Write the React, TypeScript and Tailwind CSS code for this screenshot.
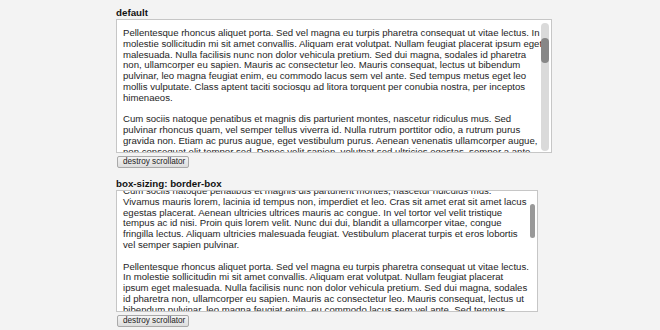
import React from "react";

const P1 =
  "Pellentesque rhoncus aliquet porta. Sed vel magna eu turpis pharetra consequat ut vitae lectus. In molestie sollicitudin mi sit amet convallis. Aliquam erat volutpat. Nullam feugiat placerat ipsum eget malesuada. Nulla facilisis nunc non dolor vehicula pretium. Sed dui magna, sodales id pharetra non, ullamcorper eu sapien. Mauris ac consectetur leo. Mauris consequat, lectus ut bibendum pulvinar, leo magna feugiat enim, eu commodo lacus sem vel ante. Sed tempus metus eget leo mollis vulputate. Class aptent taciti sociosqu ad litora torquent per conubia nostra, per inceptos himenaeos.";

const P2 =
  "Cum sociis natoque penatibus et magnis dis parturient montes, nascetur ridiculus mus. Sed pulvinar rhoncus quam, vel semper tellus viverra id. Nulla rutrum porttitor odio, a rutrum purus gravida non. Etiam ac purus augue, eget vestibulum purus. Aenean venenatis ullamcorper augue, non consequat elit tempor sed. Donec velit sapien, volutpat sed ultricies egestas, semper a ante. Nunc vitae nisi eget nulla gravida tristique.";

const P3a = "Cum sociis natoque penatibus et magnis dis parturient montes, nascetur ridiculus mus.";
const P3b =
  "Vivamus mauris lorem, lacinia id tempus non, imperdiet et leo. Cras sit amet erat sit amet lacus egestas placerat. Aenean ultricies ultrices mauris ac congue. In vel tortor vel velit tristique tempus ac id nisi. Proin quis lorem velit. Nunc dui dui, blandit a ullamcorper vitae, congue fringilla lectus. Aliquam ultricies malesuada feugiat. Vestibulum placerat turpis et eros lobortis vel semper sapien pulvinar.";

function DestroyButton() {
  return (
    <button
      type="button"
      className="mt-[3px] ml-[1px] flex h-[12px] items-center whitespace-nowrap rounded-[2px] border border-[#a9a9a9] bg-gradient-to-b from-[#f4f4f4] to-[#dddddd] pl-[5px] pr-[3px] text-[8.2px] leading-[10px] text-[#222]"
    >
      destroy scrollator
    </button>
  );
}

export default function App() {
  return (
    <div className="min-h-[330px] w-full bg-[#f3f3f3] pt-[7px] pl-[116px] font-['Liberation_Sans',Arial,sans-serif] text-[#1e1e1e]">
      <section className="flex flex-col items-start">
        <div className="h-[12px] text-[9.75px] font-bold leading-[12px] text-[#111]">default</div>
        <div className="relative h-[134px] w-[436px] overflow-hidden border border-[#c6c6c6] bg-white">
          <div className="px-[6px] pt-[8px] text-[9.6px] leading-[10.8px]">
            <p className="mb-[10.8px]">{P1}</p>
            <p>{P2}</p>
          </div>
          <div className="absolute top-[3px] right-[2px] bottom-[1px] w-[8px] rounded-full bg-[#dadada]">
            <div className="absolute top-[15px] right-0 left-0 h-[25px] rounded-full bg-[#878787]" />
          </div>
        </div>
        <DestroyButton />
      </section>

      <section className="mt-[10px] flex flex-col items-start">
        <div className="h-[12px] text-[9.75px] font-bold leading-[12px] text-[#111]">box-sizing: border-box</div>
        <div className="relative h-[122px] w-[422px] overflow-hidden border border-[#c6c6c6] bg-white">
          <div className="-mt-[5px] px-[6px] text-[9.6px] leading-[10.8px]">
            <p className="mb-[10.8px]">
              {P3a}
              <br />
              {P3b}
            </p>
            <p className="mb-[10.8px]">{P1}</p>
            <p>{P2}</p>
          </div>
          <div className="absolute top-[13px] right-[2px] h-[34px] w-[5px] rounded-full bg-[#999999]" />
        </div>
        <DestroyButton />
      </section>
    </div>
  );
}
